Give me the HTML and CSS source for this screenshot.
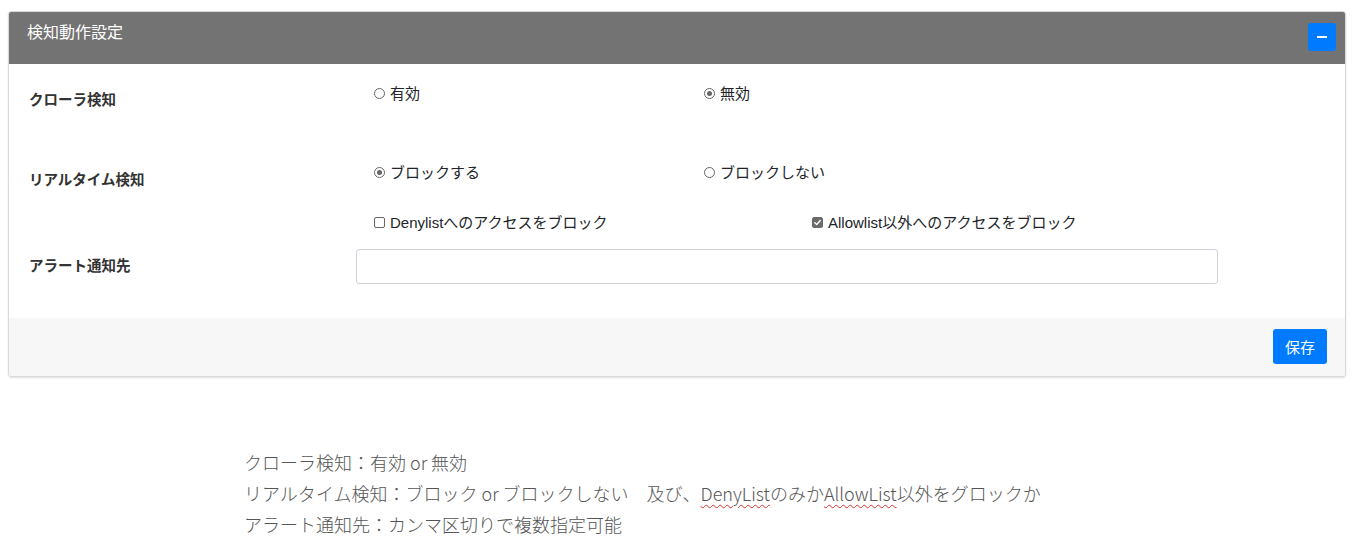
FILE: index.html
```html
<!DOCTYPE html>
<html lang="ja">
<head>
<meta charset="utf-8">
<title>検知動作設定</title>
<link rel="stylesheet" href="styles.css">
</head>
<body>
<div class="card">
  <div class="card-header">
    <div class="card-title">検知動作設定</div>
    <button class="btn-collapse" type="button"><span class="minus"></span></button>
  </div>
  <div class="card-body">
    <div class="row row1">
      <div class="label">クローラ検知</div>
      <div class="controls radios">
        <label class="opt"><span class="radio"></span>有効</label>
        <label class="opt"><span class="radio checked"></span>無効</label>
      </div>
    </div>
    <div class="row row2">
      <div class="label">リアルタイム検知</div>
      <div class="controls radios">
        <label class="opt"><span class="radio checked"></span>ブロックする</label>
        <label class="opt"><span class="radio"></span>ブロックしない</label>
      </div>
    </div>
    <div class="row row3">
      <div class="label">アラート通知先</div>
      <div class="controls">
        <div class="checks">
          <label class="opt"><span class="check"></span>Denylistへのアクセスをブロック</label>
          <label class="opt"><span class="check checked"><svg viewBox="0 0 10 10" width="9" height="9"><path d="M2 5.2 L4.2 7.3 L8 2.8" fill="none" stroke="#fff" stroke-width="1.6" stroke-linecap="round" stroke-linejoin="round"/></svg></span>Allowlist以外へのアクセスをブロック</label>
        </div>
        <input class="input" type="text">
      </div>
    </div>
  </div>
  <div class="card-footer">
    <button class="btn-save" type="button">保存</button>
  </div>
</div>

<div class="notes">
  <p>クローラ検知：有効 or 無効</p>
  <p>リアルタイム検知：ブロック or ブロックしない　及び、<span class="sp">DenyList</span>のみか<span class="sp">AllowList</span>以外をグロックか</p>
  <p>アラート通知先：カンマ区切りで複数指定可能</p>
</div>
</body>
</html>
```

FILE: styles.css
```css
* { box-sizing: border-box; }

body {
  margin: 0;
  background: #fff;
  font-family: "Liberation Sans", Arial, "Noto Sans CJK JP", sans-serif;
  font-size: 14px;
  color: #212529;
}

.card {
  margin: 11px 15px 0 8px;
  border: 1px solid #d9d9d9;
  border-radius: 3px;
  box-shadow: 0 1px 2px rgba(0,0,0,0.12);
  overflow: hidden;
}

.card-header {
  background: #737373;
  height: 52px;
  display: flex;
  justify-content: space-between;
  align-items: flex-start;
  padding: 0 9px 0 18px;
}

.card-title {
  color: #fff;
  font-size: 16px;
  line-height: 22px;
  padding-top: 10px;
}

.btn-collapse {
  margin-top: 11px;
  width: 28px;
  height: 28px;
  border: none;
  border-radius: 3px;
  background: #007bff;
  display: flex;
  align-items: center;
  justify-content: center;
  padding: 0;
}

.minus {
  display: block;
  width: 10px;
  height: 2px;
  background: #fff;
}

.card-body {
  padding: 0 0 0 20px;
  height: 254px;
}

.row {
  display: flex;
}

.label {
  width: 327px;
  font-weight: bold;
  font-size: 14.5px;
  line-height: 21px;
  color: #333;
}

.controls {
  flex: none;
  width: 862px;
}

.radios {
  display: grid;
  grid-template-columns: 330px 330px;
  align-content: start;
  padding-left: 18px;
}

.row1 { height: 78px; }
.row1 .label { padding-top: 26px; }
.row1 .controls { padding-top: 19px; }

.row2 { height: 58px; }
.row2 .label { padding-top: 28px; }
.row2 .controls { padding-top: 20px; }

.row3 .label { padding-top: 56px; }
.row3 .controls { padding-top: 12px; }

.checks {
  display: grid;
  grid-template-columns: 438px 400px;
  align-content: start;
  padding-left: 18px;
  margin-bottom: 16px;
}

.opt {
  display: flex;
  align-items: center;
  font-size: 15px;
  line-height: 21px;
  color: #212529;
  white-space: nowrap;
}

.radio {
  width: 11px;
  height: 11px;
  border: 1px solid #666;
  border-radius: 50%;
  margin-right: 5px;
  display: inline-flex;
  align-items: center;
  justify-content: center;
  flex: none;
}

.radio.checked::after {
  content: "";
  width: 5px;
  height: 5px;
  border-radius: 50%;
  background: #666;
}

.check {
  width: 11px;
  height: 11px;
  border: 1px solid #666;
  border-radius: 2px;
  margin-right: 5px;
  display: inline-flex;
  align-items: center;
  justify-content: center;
  flex: none;
}

.check.checked {
  background: #6b6b6b;
  border-color: #6b6b6b;
}

.input {
  display: block;
  width: 862px;
  height: 35px;
  border: 1px solid #ced4da;
  border-radius: 3px;
  background: #fff;
  margin: 0;
}

.card-footer {
  background: #f7f7f7;
  height: 58px;
  display: flex;
  justify-content: flex-end;
  align-items: flex-start;
  padding: 11px 18px 0 0;
}

.btn-save {
  background: #007bff;
  color: #fff;
  border: none;
  border-radius: 3px;
  width: 54px;
  height: 35px;
  font-size: 15px;
  font-family: "Noto Sans CJK JP", sans-serif;
  padding: 0;
}

.notes {
  margin-top: 70px;
  padding-left: 244px;
  font-family: "Noto Sans CJK JP", sans-serif;
  font-weight: 300;
  font-size: 18px;
  color: #555;
}

.notes p {
  margin: 0;
  line-height: 31px;
}

.sp {
  text-decoration: underline wavy #e03030;
  text-decoration-thickness: 1px;
  text-underline-offset: 3px;
}
```
